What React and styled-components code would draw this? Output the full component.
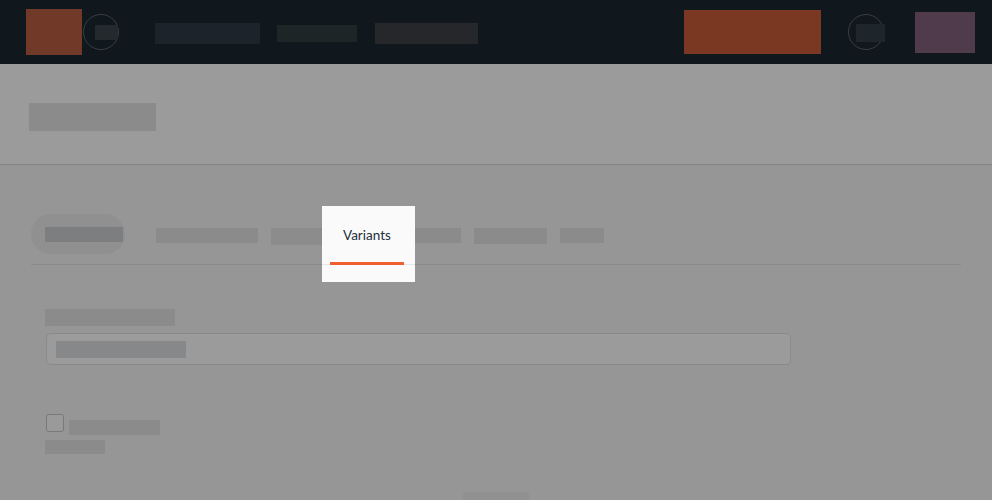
import React from "react";
import styled, { createGlobalStyle } from "styled-components";

const GlobalStyle = createGlobalStyle`
  *, *::before, *::after { box-sizing: border-box; }
  html, body { margin: 0; height: 100%; overflow: hidden; background: #969696; }
  body { font-family: Lato, "Open Sans", sans-serif; }
`;

const Page = styled.div`
  height: 500px;
  display: flex;
  flex-direction: column;
  overflow: hidden;
  background: #969696;
`;

const Block = styled.div`
  flex: none;
  width: ${({ $w }) => $w}px;
  height: ${({ $h }) => $h}px;
  margin-left: ${({ $gap = 0 }) => $gap}px;
  margin-top: ${({ $top = 0 }) => $top}px;
  background: ${({ $color = "#8b8b8b" }) => $color};
`;

const TopBar = styled.header`
  flex: none;
  display: flex;
  align-items: flex-start;
  height: 64px;
  padding: 0 17px 0 26px;
  background: #10181d;
`;

const NavGroup = styled.nav`
  display: flex;
  align-items: flex-start;
`;

const ActionGroup = styled(NavGroup)`
  margin-left: auto;
`;

const RoundButton = styled.div`
  flex: none;
  display: flex;
  width: 36px;
  height: 36px;
  margin: 14px 0 0 ${({ $gap }) => $gap}px;
  border: 1px solid #3b3e42;
  border-radius: 50%;
`;

const TitleBar = styled.section`
  flex: none;
  display: flex;
  height: 101px;
  padding: 39px 29px 0;
  background: #9b9b9b;
  border-bottom: 1px solid #838383;
`;

const Tabs = styled.nav`
  flex: none;
  display: flex;
  align-items: flex-start;
  height: 59px;
  margin: 41px 31px 0;
  border-bottom: 1px solid #8a8a8a;
`;

const Pill = styled.div`
  flex: none;
  width: 94px;
  height: 40px;
  margin-top: 8px;
  padding: 13px 0 0 14px;
  border-radius: 20px;
  background: #909090;
`;

const ActiveTab = styled.div`
  flex: none;
  display: flex;
  flex-direction: column;
  width: 93px;
  height: 76px;
  background: linear-gradient(#e6e7e8, #e6e7e8) 0 58px / 100% 1px no-repeat #fafafa;
`;

const TabLabel = styled.span`
  height: 56px;
  padding-left: 21px;
  color: #22303a;
  font-size: 13.5px;
  line-height: 59px;
`;

const Underline = styled.div`
  width: 74px;
  height: 3px;
  margin-left: 8px;
  background: #f05e30;
`;

const Form = styled.main`
  flex: none;
  display: flex;
  flex-direction: column;
  padding: 44px 45px 0;
`;

const Field = styled.div`
  width: 745px;
  height: 32px;
  margin: 7px 0 0 1px;
  padding: 7px 9px;
  border: 1px solid #8a8a8a;
  border-radius: 5px;
  background: #9b9b9b;
`;

const CheckRow = styled.div`
  display: flex;
  height: 21px;
  margin: 49px 0 0 1px;
`;

const Checkbox = styled.div`
  width: 18px;
  height: 18px;
  border: 1px solid #77797c;
  border-radius: 3px;
  background: #9a9a9a;
`;

const FooterButton = styled.div`
  width: 66px;
  height: 20px;
  margin: 38px 0 0 418px;
  border-radius: 2px;
  background: #919191;
`;

export default function App() {
  return (
    <>
      <GlobalStyle />
      <Page>
        <TopBar>
          <NavGroup>
            <Block $w={56} $h={46} $top={9} $color="#713927" />
            <RoundButton $gap={1}>
              <Block $w={23} $h={15} $gap={11} $top={10} $color="#23292c" />
            </RoundButton>
            <Block $w={105} $h={21} $gap={36} $top={23} $color="#1c232a" />
            <Block $w={80} $h={17} $gap={17} $top={25} $color="#1d2527" />
            <Block $w={103} $h={21} $gap={18} $top={23} $color="#26272b" />
          </NavGroup>
          <ActionGroup>
            <Block $w={137} $h={44} $top={10} $color="#7a3722" />
            <RoundButton $gap={27}>
              <Block $w={29} $h={18} $gap={7} $top={9} $color="#1f262b" />
            </RoundButton>
            <Block $w={60} $h={41} $gap={31} $top={12} $color="#4f3b4c" />
          </ActionGroup>
        </TopBar>
        <TitleBar>
          <Block $w={127} $h={28} />
        </TitleBar>
        <Tabs>
          <Pill>
            <Block $w={78} $h={15} $color="#7c7e80" />
          </Pill>
          <Block $w={102} $h={15} $gap={31} $top={22} />
          <Block $w={51} $h={17} $gap={13} $top={22} $color="#8c8c8c" />
          <ActiveTab>
            <TabLabel>Variants</TabLabel>
            <Underline />
          </ActiveTab>
          <Block $w={46} $h={15} $top={22} />
          <Block $w={73} $h={16} $gap={13} $top={22} />
          <Block $w={44} $h={15} $gap={13} $top={22} />
        </Tabs>
        <Form>
          <Block $w={130} $h={17} />
          <Field>
            <Block $w={130} $h={17} $color="#87888a" />
          </Field>
          <CheckRow>
            <Checkbox />
            <Block $w={91} $h={15} $gap={5} $top={6} />
          </CheckRow>
          <Block $w={60} $h={14} $top={5} />
          <FooterButton />
        </Form>
      </Page>
    </>
  );
}
